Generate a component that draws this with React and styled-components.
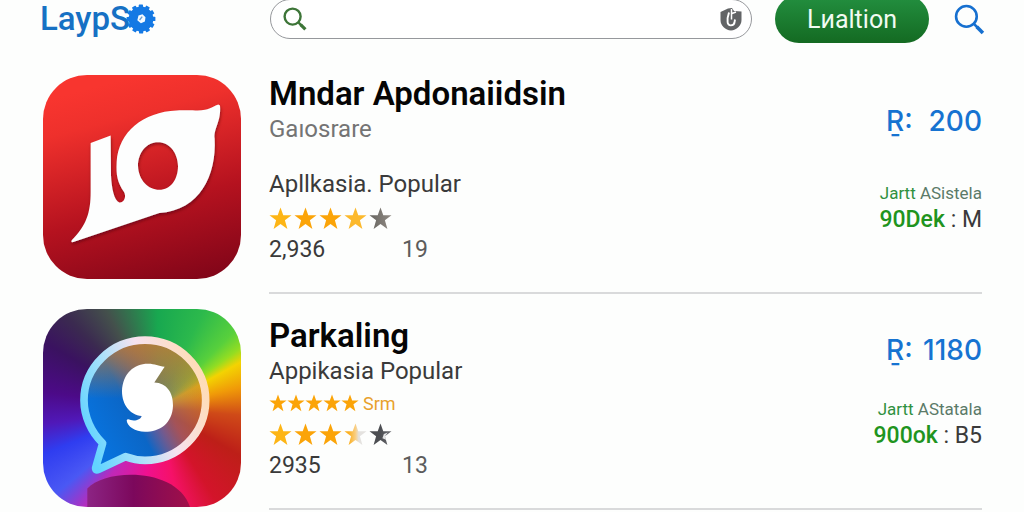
import React from "react";
import styled, { createGlobalStyle } from "styled-components";

const Global = createGlobalStyle`
  *, *::before, *::after { box-sizing: border-box; }
  body {
    margin: 0;
    background: #fdfefd;
    color: #3a3a3a;
    font-family: Roboto, "Liberation Sans", sans-serif;
  }
  h2, p, ul { margin: 0; padding: 0; }
`;

const Page = styled.div`
  padding: 0 42px 0 40px;
`;

const Header = styled.header`
  display: flex;
  align-items: center;
  height: 38px;
  margin-right: -3px;
`;

const Logo = styled.a`
  flex: 0 0 230px;
  display: flex;
  align-items: center;
  color: #1671c4;
  font-size: 33px;
  font-weight: 500;
  line-height: 38px;
  text-decoration: none;
  svg { margin-left: -4px; }
`;

const SearchBox = styled.label`
  flex: 1;
  min-width: 0;
  height: 40px;
  display: flex;
  align-items: center;
  gap: 8px;
  padding: 0 9px 0 12px;
  border: 1px solid #96989c;
  border-radius: 20px;
  background: #fff;
`;

const SearchInput = styled.input`
  flex: 1;
  min-width: 0;
  border: 0;
  outline: 0;
  background: transparent;
  font: inherit;
  font-size: 20px;
`;

const ActionButton = styled.button`
  flex: 0 0 154px;
  height: 48px;
  margin: 0 25px 0 23px;
  padding: 0;
  border: 0;
  border-radius: 24px;
  background: linear-gradient(#239040, #146a22);
  color: #f2fbf2;
  font: inherit;
  font-size: 25px;
`;

const IconButton = styled.button`
  display: flex;
  padding: 0;
  border: 0;
  background: none;
`;

const AppList = styled.ul`
  list-style: none;
  margin-top: 14px;
  padding-left: 3px;
`;

const AppItem = styled.li`
  display: flex;
  gap: 28px;
`;

const Tile = styled.div`
  flex: 0 0 198px;
  height: ${(p) => p.$height}px;
  margin-top: ${(p) => p.$top}px;
  border-radius: 44px;
  overflow: hidden;
  background: ${(p) => p.$fill};
  svg { display: block; width: 100%; height: 100%; }
`;

const Body = styled.div`
  flex: 1;
  min-width: 0;
  display: flex;
  justify-content: space-between;
  padding-top: 22px;
  border-bottom: 2px solid #d9dadb;
`;

const Info = styled.div`
  padding-bottom: 27px;
`;

const Title = styled.h2`
  color: #050505;
  font-size: 33px;
  line-height: 40px;
  font-weight: 600;
`;

const Category = styled.p`
  color: #747474;
  font-size: 24px;
  line-height: 30px;
  margin-bottom: 25px;
`;

const Tagline = styled.p`
  font-size: 24px;
  line-height: 30px;
`;

const Rating = styled.div`
  display: flex;
  align-items: center;
  height: 24px;
  margin: 7px 0 5px;
`;

const SmallRating = styled(Rating)`
  margin: 5px 0 0;
  color: #e8a12c;
  font-size: 18px;
  span { margin-left: 4px; }
`;

const Counts = styled.p`
  display: grid;
  grid-template-columns: 133px auto;
  font-size: 23px;
  line-height: 30px;
  span + span { color: #5c5c5c; }
`;

const Side = styled.div`
  display: flex;
  flex-direction: column;
  justify-content: flex-end;
  align-items: flex-end;
  padding-bottom: 57px;
  white-space: nowrap;
`;

const Price = styled.p`
  display: flex;
  justify-content: space-between;
  min-width: 96px;
  margin-bottom: ${(p) => p.$below}px;
  color: #1673d1;
  font-family: Inter, Roboto, sans-serif;
  font-size: 28px;
  font-weight: 500;
  line-height: 40px;
`;

const Developer = styled.p`
  color: #5b7a68;
  font-size: 17px;
  line-height: 24px;
  b { color: #2f9140; font-weight: 400; }
`;

const Size = styled.p`
  font-size: 23px;
  line-height: 30px;
  b { color: #1f9420; font-weight: 500; }
`;

function Gear() {
  const teeth = Array.from({ length: 12 }, (_, i) => i * 30);
  return (
    <svg width="30" height="30" viewBox="0 0 30 30" aria-hidden="true">
      <g fill="#1479e4">
        <circle cx="15" cy="15" r="12.4" />
        {teeth.map((a) => (
          <rect key={a} x="12.8" y="0.6" width="4.2" height="5" rx="0.6" transform={`rotate(${a} 15 15)`} />
        ))}
      </g>
      <path d="M12.5 11.5l4-1.2 3 3-.6 4.2-4 1.8-3.6-3z" fill="#f4faff" />
      <path d="M13.6 16l2.6-3.4" stroke="#6a9fd4" strokeWidth="1.4" />
    </svg>
  );
}

function Magnifier({ size, color, stroke }) {
  return (
    <svg width={size} height={size} viewBox="0 0 30 30" fill="none" stroke={color} aria-hidden="true">
      <circle cx="12" cy="12" r="10" strokeWidth={stroke} />
      <path d="M19.5 19.5l4 4" strokeWidth={stroke} />
      <path d="M22 22l6 6" strokeWidth={stroke + 1} />
    </svg>
  );
}

function Shield() {
  return (
    <svg width="22" height="24" viewBox="0 0 22 24" aria-hidden="true">
      <path d="M0.5 5L8 1.500l4-.5 2 3 7.500.6V13c0 6-5 10-10.500 10.500C5.500 23 0.500 19 0.500 13z" fill="#626466" />
      <path d="M9 5.500L7.600 11v4c0 4.600 6.500 4.400 7-.2l.4-2.300" fill="none" stroke="#fff" strokeWidth="1.900" />
      <path d="M11.500 2v10.500M12 6.500l4-1.500" fill="none" stroke="#fff" strokeWidth="1.500" />
    </svg>
  );
}

const STAR = "M12 0.500l2.900 8h8.600l-6.900 5.200 2.600 9.300-7.200-5.300-7.200 5.300 2.600-9.300L0.500 8.500h8.600z";
const STAR_FILLS = { gold: "#fdb515", orange: "#fba408", amber: "#fcb92c" };

function Star({ kind, size, step }) {
  const id = `star-${kind}`;
  return (
    <svg width={step} height={size} viewBox={`0 0 ${(24 * step) / size} 24`} aria-hidden="true">
      {kind === "grey" && (
        <linearGradient id={id}>
          <stop offset="0" stopColor="#66645f" />
          <stop offset="1" stopColor="#918b85" />
        </linearGradient>
      )}
      {kind === "half" && (
        <linearGradient id={id}>
          <stop offset="0.2" stopColor="#fbb021" />
          <stop offset="0.5" stopColor="#f9cf85" />
          <stop offset="0.65" stopColor="#e4e2df" />
        </linearGradient>
      )}
      {kind === "dark" && (
        <linearGradient id={id}>
          <stop offset="0.5" stopColor="#4c4e52" />
          <stop offset="1" stopColor="#6c6e72" />
        </linearGradient>
      )}
      <path d={STAR} fill={STAR_FILLS[kind] || `url(#${id})`} />
      {kind === "dark" && <path d="M14 16l1.500-4.500 4-1.500-2.500 3.500.8 4z" fill="#e2e3e4" />}
    </svg>
  );
}

function RedMark() {
  return (
    <svg viewBox="39 30 594 610" preserveAspectRatio="none" aria-hidden="true">
      <defs>
        <filter id="drop" x="-10%" y="-10%" width="120%" height="125%">
          <feDropShadow dx="2" dy="6" stdDeviation="5" floodColor="#500010" floodOpacity="0.550" />
        </filter>
      </defs>
      <path
        filter="url(#drop)"
        fill="#fdfefe"
        fillRule="evenodd"
        d="M182 233L242 211L243 330C245 370 252 405 268 411C282 412 290 395 282 380C262 350 258 330 260 290C265 200 340 140 440 136C490 134 505 138 525 134C545 130 554 121 565 118L570 121C574 170 550 190 554 220C560 330 510 435 388 443L128 530Q122 530 125 524C170 480 182 440 182 380Z
        M384 231C350 231 324 262 324 302C326 345 355 373 388 373C422 373 444 342 444 302C443 262 418 231 384 231Z"
      />
    </svg>
  );
}

function BubbleMark() {
  const bubble =
    "M286 470C305 477 325 481 345 481C444 481 527 401 527 302C527 203 444 123 345 123C246 123 162 203 162 302C162 350 184 398 218 430L197 503Q196 512 205 508Z";
  return (
    <svg viewBox="39 30 594 590" preserveAspectRatio="none" aria-hidden="true">
      <defs>
        <linearGradient id="inside" x1="0.100" y1="0.700" x2="0.900" y2="0.250">
          <stop offset="0" stopColor="#0872dc" />
          <stop offset="0.350" stopColor="#0b66c6" />
          <stop offset="0.650" stopColor="#956b70" stopOpacity="0.700" />
          <stop offset="1" stopColor="#c87a30" stopOpacity="0.450" />
        </linearGradient>
        <linearGradient id="warm" x1="0" y1="0" x2="0" y2="1">
          <stop offset="0" stopColor="#bd7c38" stopOpacity="0.850" />
          <stop offset="0.450" stopColor="#bd7c38" stopOpacity="0" />
        </linearGradient>
        <linearGradient id="rim" x1="0" y1="0.700" x2="1" y2="0.300">
          <stop offset="0" stopColor="#62d4ff" />
          <stop offset="0.300" stopColor="#a4e0fb" />
          <stop offset="0.600" stopColor="#f6e2f0" />
          <stop offset="1" stopColor="#ffdcb4" />
        </linearGradient>
        <linearGradient id="shade" x1="0" y1="0" x2="1" y2="0">
          <stop offset="0" stopColor="#8c2484" />
          <stop offset="0.450" stopColor="#7c085c" />
          <stop offset="1" stopColor="#a01048" />
        </linearGradient>
      </defs>
      <path d="M172 620V565C225 505 440 500 480 620Z" fill="url(#shade)" />
      <path d={bubble} fill="url(#inside)" />
      <path d={bubble} fill="url(#warm)" />
      <path d={bubble} fill="none" stroke="url(#rim)" strokeWidth="23" strokeLinejoin="round" />
      <path
        fill="#fff"
        d="M404 202L373 249C410 250 430 280 429 318C427 370 390 396 345 396C315 395 292 380 290 362Q292 355 302 361C315 365 332 360 335 349C300 345 276 315 276 275C278 220 315 192 355 193C375 193 385 200 404 202Z"
      />
    </svg>
  );
}

const SPECTRUM = `conic-gradient(from 0deg at 58% 50%,
  #18a850 0deg, #2cb94c 25deg, #58d03c 45deg, #93dd22 54deg, #f3d302 61deg,
  #f09a08 76deg, #cf4a18 95deg, #bd1f18 120deg, #d3142a 148deg, #f51168 168deg,
  #f01090 190deg, #c028b8 215deg, #4a58f4 230deg, #2f3df0 248deg, #5018b8 262deg,
  #4c0a88 278deg, #3a1260 300deg, #3b2a50 315deg, #44504c 332deg, #18a850 360deg)`;

const APPS = [
  {
    name: "Mndar Apdonaiidsin",
    category: "Gaıosrare",
    tagline: "Apllkasia. Popular",
    stars: ["gold", "orange", "orange", "amber", "grey"],
    counts: ["2,936", "19"],
    price: "200",
    priceGap: 40,
    developer: "ASistela",
    size: ["90Dek", "M"],
    tile: { $height: 204, $top: 23, $fill: "linear-gradient(165deg, #f8352f 10%, #ee302c 25%, #b5121f 62%, #7c0418)" },
    mark: <RedMark />,
  },
  {
    name: "Parkaling",
    tagline: "Appikasia Popular",
    extra: "Srm",
    stars: ["gold", "orange", "orange", "half", "dark"],
    counts: ["2935", "13"],
    price: "1180",
    priceGap: 27,
    developer: "AStatala",
    size: ["900ok", "B5"],
    tile: { $height: 198, $top: 15, $fill: SPECTRUM },
    mark: <BubbleMark />,
  },
];

function AppRow({ app }) {
  return (
    <AppItem>
      <Tile {...app.tile}>{app.mark}</Tile>
      <Body>
        <Info>
          <Title>{app.name}</Title>
          {app.category && <Category>{app.category}</Category>}
          <Tagline>{app.tagline}</Tagline>
          {app.extra && (
            <SmallRating>
              {[0, 1, 2, 3, 4].map((i) => (
                <Star key={i} kind="orange" size={18} step={18} />
              ))}
              <span>{app.extra}</span>
            </SmallRating>
          )}
          <Rating>
            {app.stars.map((kind, i) => (
              <Star key={i} kind={kind} size={23} step={25} />
            ))}
          </Rating>
          <Counts>
            <span>{app.counts[0]}</span>
            <span>{app.counts[1]}</span>
          </Counts>
        </Info>
        <Side>
          <Price $below={app.priceGap}>
            <span>Ṟ:</span>
            <span>{app.price}</span>
          </Price>
          <Developer>
            <b>Jartt</b> {app.developer}
          </Developer>
          <Size>
            <b>{app.size[0]}</b> : {app.size[1]}
          </Size>
        </Side>
      </Body>
    </AppItem>
  );
}

export default function App() {
  return (
    <>
      <Global />
      <Page>
        <Header>
          <Logo href="#">
            LaypS
            <Gear />
          </Logo>
          <SearchBox>
            <Magnifier size={24} color="#3d7538" stroke={3} />
            <SearchInput type="text" aria-label="Search" />
            <Shield />
          </SearchBox>
          <ActionButton type="button">Lиaltion</ActionButton>
          <IconButton type="button" aria-label="Search">
            <Magnifier size={31} color="#1670d0" stroke={2.5} />
          </IconButton>
        </Header>
        <AppList>
          {APPS.map((app) => (
            <AppRow key={app.name} app={app} />
          ))}
        </AppList>
      </Page>
    </>
  );
}
